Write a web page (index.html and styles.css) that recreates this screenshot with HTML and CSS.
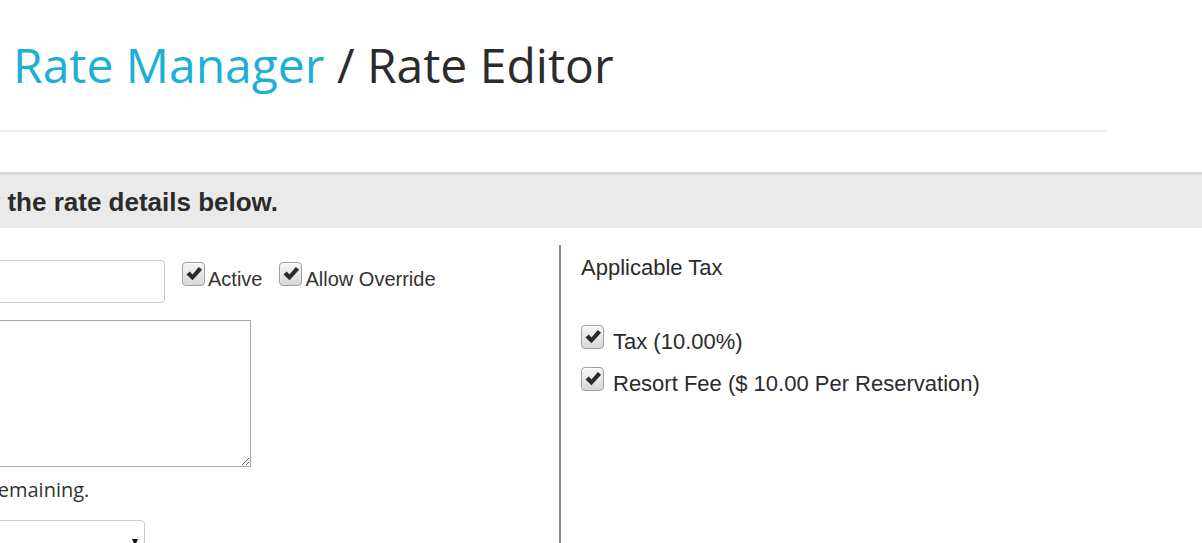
FILE: index.html
```html
<!DOCTYPE html>
<html lang="en">
<head>
    <meta charset="UTF-8">
    <meta name="viewport" content="width=device-width, initial-scale=1.0">
    <title>Rate Editor</title>
    <link rel="stylesheet" href="styles.css">
</head>
<body>
    <header class="page-header">
        <h1><a href="#">Rate Manager</a> / Rate Editor</h1>
    </header>

    <section class="panel">
        <div class="panel-heading">
            <h2>Please enter the rate details below.</h2>
        </div>

        <div class="panel-body">
            <!-- Kolom kiri: nama, deskripsi, jenis -->
            <div class="col-left">
                <div class="name-row">
                    <input type="text" class="form-control name-input">
                    <label class="check-label">
                        <span class="check-box"><svg viewBox="0 0 24 24" width="18" height="18"><path d="M2 12.8 L6.3 8.8 L10 12.6 L18.4 2.6 L22.8 6.4 L10 20.4 Z" fill="#2a2a2a"/></svg></span>
                        Active
                    </label>
                    <label class="check-label">
                        <span class="check-box"><svg viewBox="0 0 24 24" width="18" height="18"><path d="M2 12.8 L6.3 8.8 L10 12.6 L18.4 2.6 L22.8 6.4 L10 20.4 Z" fill="#2a2a2a"/></svg></span>
                        Allow Override
                    </label>
                </div>
                <textarea class="description"></textarea>
                <p class="help-text">500 characters remaining.</p>
                <div class="select-wrap">
                    <select class="form-control rate-type">
                        <option></option>
                    </select>
                </div>
            </div>

            <!-- Kolom kanan: pajak -->
            <div class="col-right">
                <h3>Applicable Tax</h3>
                <ul class="tax-list">
                    <li>
                        <label class="tax-label">
                            <span class="check-box"><svg viewBox="0 0 24 24" width="18" height="18"><path d="M2 12.8 L6.3 8.8 L10 12.6 L18.4 2.6 L22.8 6.4 L10 20.4 Z" fill="#2a2a2a"/></svg></span>
                            Tax (10.00%)
                        </label>
                    </li>
                    <li>
                        <label class="tax-label">
                            <span class="check-box"><svg viewBox="0 0 24 24" width="18" height="18"><path d="M2 12.8 L6.3 8.8 L10 12.6 L18.4 2.6 L22.8 6.4 L10 20.4 Z" fill="#2a2a2a"/></svg></span>
                            Resort Fee ($ 10.00 Per Reservation)
                        </label>
                    </li>
                </ul>
            </div>
        </div>
    </section>
</body>
</html>
```

FILE: styles.css
```css
/* Reset dasar */
* {
    margin: 0;
    padding: 0;
    box-sizing: border-box;
}

body {
    font-family: "Liberation Sans", Arial, sans-serif;
    color: #333;
    background-color: #fff;
    overflow: hidden;
}

/* Judul halaman */
.page-header {
    width: 1107px;
    padding: 39px 13px 38px;
    border-bottom: 2px solid #eee;
}

.page-header h1 {
    font-family: "Open Sans", sans-serif;
    font-size: 48px;
    font-weight: 400;
    line-height: 1.1;
    color: #2b2b2b;
    white-space: nowrap;
}

.page-header h1 a {
    color: #1cb0d6;
    text-decoration: none;
}

/* Panel form (digeser ke kiri seperti halaman yang di-scroll) */
.panel {
    margin-top: 40px;
    margin-left: -168px;
}

.panel-heading {
    border-top: 3px solid #dadada;
    background-color: #eaeaea;
    height: 56px;
    padding-left: 15px;
}

.panel-heading h2 {
    font-size: 26px;
    font-weight: 700;
    line-height: 54px;
    color: #2b2b2b;
    white-space: nowrap;
}

.panel-body {
    display: flex;
    margin-top: 17px;
    min-height: 320px;
}

/* Kolom kiri */
.col-left {
    width: 727px;
    padding-left: 15px;
    padding-top: 15px;
}

.name-row {
    display: flex;
    align-items: flex-start;
}

.form-control {
    border: 1px solid #ccc;
    border-radius: 4px;
    background-color: #fff;
    font-family: inherit;
    font-size: 20px;
}

.name-input {
    width: 318px;
    height: 43px;
    margin-right: 17px;
}

.check-label {
    display: inline-flex;
    align-items: baseline;
    font-size: 20px;
    line-height: 23px;
    margin-top: 2px;
    margin-right: 17px;
    white-space: nowrap;
}

/* Kotak centang bergaya lama */
.check-box {
    display: block;
    width: 23px;
    height: 24px;
    padding: 2px 0 0 2px;
    border: 1px solid #a0a0a0;
    border-radius: 4px;
    background: linear-gradient(#f6f6f6, #d8d8d8);
    box-shadow: inset 0 1px 1px rgba(255, 255, 255, 0.9);
    flex-shrink: 0;
}

.check-box svg {
    display: block;
}

.check-label .check-box {
    margin-right: 3px;
}

.description {
    display: block;
    width: 404px;
    height: 147px;
    margin-top: 17px;
    border: 1px solid #a9a9a9;
    font-family: inherit;
}

.help-text {
    font-family: "Open Sans", sans-serif;
    font-size: 20px;
    line-height: 28px;
    margin-top: 9px;
    color: #333;
    white-space: nowrap;
}

.select-wrap {
    position: relative;
    width: 298px;
    margin-top: 16px;
}

.rate-type {
    -webkit-appearance: none;
    appearance: none;
    display: block;
    width: 100%;
    height: 43px;
}

.select-wrap::after {
    content: "";
    position: absolute;
    right: 7px;
    top: 19px;
    border-left: 3.5px solid transparent;
    border-right: 3.5px solid transparent;
    border-top: 7px solid #111;
}

/* Kolom kanan */
.col-right {
    flex: 1;
    border-left: 2px solid #888;
    padding-left: 20px;
    padding-top: 10px;
}

.col-right h3 {
    font-size: 22px;
    font-weight: 400;
    line-height: 26px;
    color: #2b2b2b;
}

.tax-list {
    list-style: none;
    margin-top: 44px;
}

.tax-list li {
    margin-bottom: 12px;
}

.tax-label {
    display: inline-flex;
    align-items: baseline;
    font-size: 22px;
    line-height: 26px;
    color: #2b2b2b;
    white-space: nowrap;
}

.tax-label .check-box {
    margin-right: 9px;
}
```
